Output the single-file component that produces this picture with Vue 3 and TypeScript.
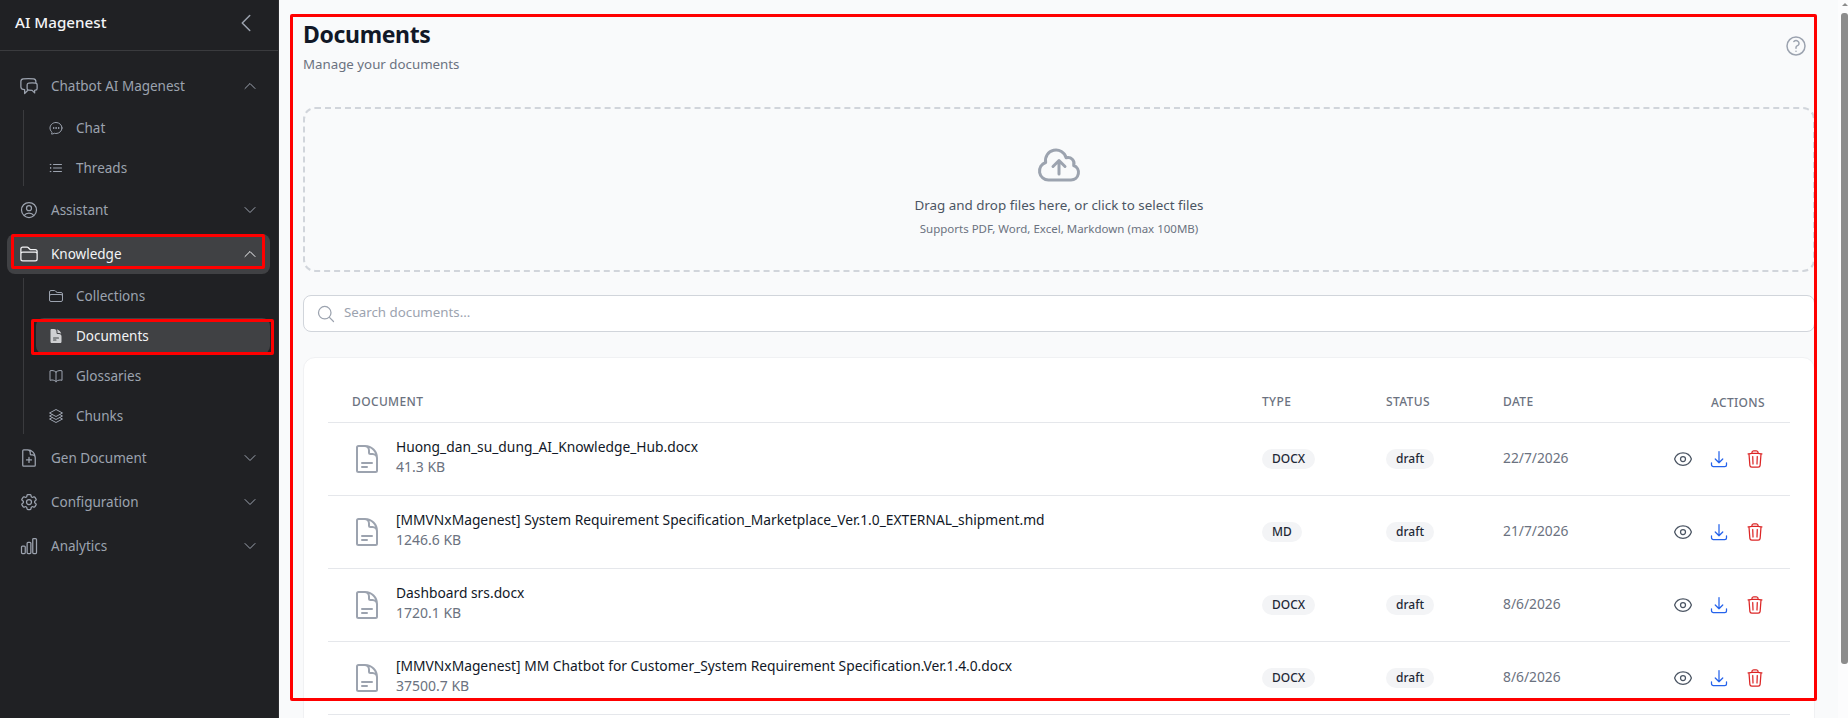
<template>
  <div class="app">
    <aside class="sidebar">
      <div class="brand">
        <span class="brand__name">AI Magenest</span>
        <svg class="icon brand__toggle" viewBox="0 0 24 24"><path :d="icons.chevronLeft" /></svg>
      </div>
      <nav class="nav">
        <template v-for="group in nav" :key="group.label">
          <div class="nav-item" :class="{ 'nav-item--active': group.active }">
            <svg class="icon nav-item__icon" viewBox="0 0 24 24"><path :d="icons[group.icon]" /></svg>
            <span class="nav-item__label">{{ group.label }}</span>
            <svg class="icon nav-item__chevron" viewBox="0 0 24 24">
              <path :d="group.children ? icons.chevronUp : icons.chevronDown" />
            </svg>
          </div>
          <div v-if="group.children" class="subnav">
            <div
              v-for="child in group.children"
              :key="child.label"
              class="subnav-item"
              :class="{ 'subnav-item--active': child.active }"
            >
              <svg class="icon subnav-item__icon" viewBox="0 0 24 24"><path :d="icons[child.icon]" /></svg>
              <span class="subnav-item__label">{{ child.label }}</span>
            </div>
          </div>
        </template>
      </nav>
    </aside>

    <main class="main">
      <header class="page-head">
        <div>
          <h1 class="page-head__title">Documents</h1>
          <p class="page-head__sub">Manage your documents</p>
        </div>
        <svg class="icon page-head__help" viewBox="0 0 24 24"><path :d="icons.help" /></svg>
      </header>

      <section class="dropzone">
        <svg class="icon dropzone__icon" viewBox="0 0 24 24"><path :d="icons.cloud" /></svg>
        <p class="dropzone__text">Drag and drop files here, or click to select files</p>
        <p class="dropzone__hint">Supports PDF, Word, Excel, Markdown (max 100MB)</p>
      </section>

      <div class="search">
        <svg class="icon search__icon" viewBox="0 0 24 24"><path :d="icons.search" /></svg>
        <span class="search__text">Search documents...</span>
      </div>

      <section class="card">
        <div class="row row--head">
          <div class="cell cell--label">Document</div>
          <div class="cell cell--label">Type</div>
          <div class="cell cell--label">Status</div>
          <div class="cell cell--label">Date</div>
          <div class="cell cell--label cell--actions">Actions</div>
        </div>
        <div v-for="doc in docs" :key="doc.name" class="row">
          <div class="cell doc">
            <svg class="icon doc__icon" viewBox="0 0 24 24"><path :d="icons.document" /></svg>
            <div class="doc__text">
              <div class="doc__name">{{ doc.name }}</div>
              <div class="doc__size">{{ doc.size }}</div>
            </div>
          </div>
          <div class="cell"><span class="pill">{{ doc.type }}</span></div>
          <div class="cell"><span class="pill">draft</span></div>
          <div class="cell date">{{ doc.date }}</div>
          <div class="cell cell--actions actions">
            <svg class="icon action action--view" viewBox="0 0 24 24"><path :d="icons.eye" /></svg>
            <svg class="icon action action--download" viewBox="0 0 24 24"><path :d="icons.download" /></svg>
            <svg class="icon action action--delete" viewBox="0 0 24 24"><path :d="icons.trash" /></svg>
          </div>
        </div>
      </section>
    </main>

    <div class="scrollbar">
      <span class="scrollbar__arrow" />
      <span class="scrollbar__thumb" />
    </div>

    <!-- red annotation boxes drawn over the screenshot -->
    <div class="mark mark--knowledge" />
    <div class="mark mark--documents" />
    <div class="mark mark--main" />
  </div>
</template>

<script setup lang="ts">
const icons: Record<string, string> = {
  chevronLeft: 'M15.75 19.5L8.25 12l7.5-7.5',
  chevronUp: 'M4.5 15.75l7.5-7.5 7.5 7.5',
  chevronDown: 'M19.5 8.25l-7.5 7.5-7.5-7.5',
  chats: 'M20.25 8.511c.884.284 1.5 1.128 1.5 2.097v4.286c0 1.136-.847 2.1-1.98 2.193-.34.027-.68.052-1.02.072v3.091l-3-3c-1.354 0-2.694-.055-4.02-.163a2.115 2.115 0 01-.825-.242m9.345-8.334a2.126 2.126 0 00-.476-.095 48.64 48.64 0 00-8.048 0c-1.131.094-1.976 1.057-1.976 2.192v4.286c0 .837.46 1.58 1.155 1.951m9.345-8.334V6.637c0-1.621-1.152-3.026-2.76-3.235A48.455 48.455 0 0011.25 3c-2.115 0-4.198.137-6.24.402-1.608.209-2.76 1.614-2.76 3.235v6.226c0 1.621 1.152 3.026 2.76 3.235.577.075 1.157.14 1.74.194V21l4.155-4.155',
  chat: 'M8.625 12a.375.375 0 11-.75 0 .375.375 0 01.75 0zm0 0H8.25m4.125 0a.375.375 0 11-.75 0 .375.375 0 01.75 0zm0 0H12m4.125 0a.375.375 0 11-.75 0 .375.375 0 01.75 0zm0 0h-.375M21 12c0 4.556-4.03 8.25-9 8.25a9.764 9.764 0 01-2.555-.337A5.972 5.972 0 015.41 20.97a5.969 5.969 0 01-.474-.065 4.48 4.48 0 00.978-2.025c.09-.457-.133-.901-.467-1.226C3.93 16.178 3 14.189 3 12c0-4.556 4.03-8.25 9-8.25s9 3.694 9 8.25z',
  list: 'M8.25 6.75h12M8.25 12h12m-12 5.25h12M3.75 6.75h.007v.008H3.75V6.75zm.375 0a.375.375 0 11-.75 0 .375.375 0 01.75 0zM3.75 12h.007v.008H3.75V12zm.375 0a.375.375 0 11-.75 0 .375.375 0 01.75 0zm-.375 5.25h.007v.008H3.75v-.008zm.375 0a.375.375 0 11-.75 0 .375.375 0 01.75 0z',
  user: 'M17.982 18.725A7.488 7.488 0 0012 15.75a7.488 7.488 0 00-5.982 2.975m11.963 0a9 9 0 10-11.963 0m11.963 0A8.966 8.966 0 0112 21a8.966 8.966 0 01-5.982-2.275M15 9.75a3 3 0 11-6 0 3 3 0 016 0z',
  folder: 'M2.25 12.75V12A2.25 2.25 0 014.5 9.75h15A2.25 2.25 0 0121.75 12v.75m-8.69-6.44l-2.12-2.12a1.5 1.5 0 00-1.061-.44H4.5A2.25 2.25 0 002.25 6v12a2.25 2.25 0 002.25 2.25h15A2.25 2.25 0 0021.75 18V9a2.25 2.25 0 00-2.25-2.25h-5.379a1.5 1.5 0 01-1.06-.44z',
  document: 'M19.5 14.25v-2.625a3.375 3.375 0 00-3.375-3.375h-1.5A1.125 1.125 0 0113.5 7.125v-1.5a3.375 3.375 0 00-3.375-3.375H8.25m0 12.75h7.5m-7.5 3H12M10.5 2.25H5.625c-.621 0-1.125.504-1.125 1.125v17.25c0 .621.504 1.125 1.125 1.125h12.75c.621 0 1.125-.504 1.125-1.125V11.25a9 9 0 00-9-9z',
  documentSolid: 'M5.625 1.5c-1.036 0-1.875.84-1.875 1.875v17.25c0 1.035.84 1.875 1.875 1.875h12.75c1.035 0 1.875-.84 1.875-1.875V12.75A3.75 3.75 0 0016.5 9h-1.875a1.875 1.875 0 01-1.875-1.875V5.25A3.75 3.75 0 009 1.5H5.625zM7.5 15a.75.75 0 01.75-.75h7.5a.75.75 0 010 1.5h-7.5A.75.75 0 017.5 15zm.75 2.25a.75.75 0 000 1.5H12a.75.75 0 000-1.5H8.25zM12.971 1.816A5.23 5.23 0 0114.25 5.25v1.875c0 .207.168.375.375.375H16.5a5.23 5.23 0 013.434 1.279 9.768 9.768 0 00-6.963-6.963z',
  book: 'M12 6.042A8.967 8.967 0 006 3.75c-1.052 0-2.062.18-3 .512v14.25A8.987 8.987 0 016 18c2.305 0 4.408.867 6 2.292m0-14.25a8.966 8.966 0 016-2.292c1.052 0 2.062.18 3 .512v14.25A8.987 8.987 0 0018 18a8.967 8.967 0 00-6 2.292m0-14.25v14.25',
  stack: 'M6.429 9.75L2.25 12l4.179 2.25m0-4.5l5.571 3 5.571-3m-11.142 0L2.25 7.5 12 2.25l9.75 5.25-4.179 2.25m0 0L21.75 12l-4.179 2.25m0 0l4.179 2.25L12 21.75 2.25 16.5l4.179-2.25m11.142 0l-5.571 3-5.571-3',
  docPlus: 'M19.5 14.25v-2.625a3.375 3.375 0 00-3.375-3.375h-1.5A1.125 1.125 0 0113.5 7.125v-1.5a3.375 3.375 0 00-3.375-3.375H8.25m3.75 9v6m3-3H9m1.5-12H5.625c-.621 0-1.125.504-1.125 1.125v17.25c0 .621.504 1.125 1.125 1.125h12.75c.621 0 1.125-.504 1.125-1.125V11.25a9 9 0 00-9-9z',
  cog: 'M9.594 3.94c.09-.542.56-.94 1.11-.94h2.593c.55 0 1.02.398 1.11.94l.213 1.281c.063.374.313.686.645.87.074.04.147.083.22.127.324.196.72.257 1.075.124l1.217-.456a1.125 1.125 0 011.37.49l1.296 2.247a1.125 1.125 0 01-.26 1.431l-1.003.827c-.293.24-.438.613-.431.992a6.759 6.759 0 010 .255c-.007.378.138.75.43.99l1.005.828c.424.35.534.954.26 1.43l-1.298 2.247a1.125 1.125 0 01-1.369.491l-1.217-.456c-.355-.133-.75-.072-1.076.124a6.57 6.57 0 01-.22.128c-.331.183-.581.495-.644.869l-.213 1.28c-.09.543-.56.941-1.11.941h-2.594c-.55 0-1.02-.398-1.11-.94l-.213-1.281c-.062-.374-.312-.686-.644-.87a6.52 6.52 0 01-.22-.127c-.325-.196-.72-.257-1.076-.124l-1.217.456a1.125 1.125 0 01-1.369-.49l-1.297-2.247a1.125 1.125 0 01.26-1.431l1.004-.827c.292-.24.437-.613.43-.992a6.932 6.932 0 010-.255c.007-.378-.138-.75-.43-.99l-1.004-.828a1.125 1.125 0 01-.26-1.43l1.297-2.247a1.125 1.125 0 011.37-.491l1.216.456c.356.133.751.072 1.076-.124.072-.044.146-.087.22-.128.332-.183.582-.495.644-.869l.214-1.281zM15 12a3 3 0 11-6 0 3 3 0 016 0z',
  chart: 'M3 13.125C3 12.504 3.504 12 4.125 12h2.25c.621 0 1.125.504 1.125 1.125v6.75C7.5 20.496 6.996 21 6.375 21h-2.25A1.125 1.125 0 013 19.875v-6.75zM9.75 8.625c0-.621.504-1.125 1.125-1.125h2.25c.621 0 1.125.504 1.125 1.125v11.25c0 .621-.504 1.125-1.125 1.125h-2.25a1.125 1.125 0 01-1.125-1.125V8.625zM16.5 4.125c0-.621.504-1.125 1.125-1.125h2.25C20.496 3 21 3.504 21 4.125v15.75c0 .621-.504 1.125-1.125 1.125h-2.25a1.125 1.125 0 01-1.125-1.125V4.125z',
  help: 'M9.879 7.519c1.171-1.025 3.071-1.025 4.242 0 1.172 1.025 1.172 2.687 0 3.712-.203.179-.43.326-.67.442-.745.361-1.45.999-1.45 1.827v.75M21 12a9 9 0 11-18 0 9 9 0 0118 0zm-9 5.25h.008v.008H12v-.008z',
  cloud: 'M12 16.5V9.75m0 0l3 3m-3-3l-3 3M6.75 19.5a4.5 4.5 0 01-1.41-8.775 5.25 5.25 0 0110.233-2.33 3 3 0 013.758 3.848A3.752 3.752 0 0118 19.5H6.75z',
  search: 'M21 21l-5.197-5.197m0 0A7.5 7.5 0 105.196 5.196a7.5 7.5 0 0010.607 10.607z',
  eye: 'M2.036 12.322a1.012 1.012 0 010-.639C3.423 7.51 7.36 4.5 12 4.5c4.638 0 8.573 3.007 9.963 7.178.07.207.07.431 0 .639C20.577 16.49 16.64 19.5 12 19.5c-4.638 0-8.573-3.007-9.963-7.178zM15 12a3 3 0 11-6 0 3 3 0 016 0z',
  download: 'M3 16.5v2.25A2.25 2.25 0 005.25 21h13.5A2.25 2.25 0 0021 18.75V16.5M16.5 12L12 16.5m0 0L7.5 12m4.5 4.5V3',
  trash: 'M14.74 9l-.346 9m-4.788 0L9.26 9m9.968-3.21c.342.052.682.107 1.022.166m-1.022-.165L18.16 19.673a2.25 2.25 0 01-2.244 2.077H8.084a2.25 2.25 0 01-2.244-2.077L4.772 5.79m14.456 0a48.108 48.108 0 00-3.478-.397m-12 .562c.34-.059.68-.114 1.022-.165m0 0a48.11 48.11 0 013.478-.397m7.5 0v-.916c0-1.18-.91-2.164-2.09-2.201a51.964 51.964 0 00-3.32 0c-1.18.037-2.09 1.022-2.09 2.201v.916m7.5 0a48.667 48.667 0 00-7.5 0',
}

interface NavChild { label: string; icon: string; active?: boolean }
interface NavGroup { label: string; icon: string; active?: boolean; children?: NavChild[] }

const nav: NavGroup[] = [
  {
    label: 'Chatbot AI Magenest',
    icon: 'chats',
    children: [
      { label: 'Chat', icon: 'chat' },
      { label: 'Threads', icon: 'list' },
    ],
  },
  { label: 'Assistant', icon: 'user' },
  {
    label: 'Knowledge',
    icon: 'folder',
    active: true,
    children: [
      { label: 'Collections', icon: 'folder' },
      { label: 'Documents', icon: 'documentSolid', active: true },
      { label: 'Glossaries', icon: 'book' },
      { label: 'Chunks', icon: 'stack' },
    ],
  },
  { label: 'Gen Document', icon: 'docPlus' },
  { label: 'Configuration', icon: 'cog' },
  { label: 'Analytics', icon: 'chart' },
]

const docs = [
  { name: 'Huong_dan_su_dung_AI_Knowledge_Hub.docx', size: '41.3 KB', type: 'DOCX', date: '22/7/2026' },
  { name: '[MMVNxMagenest] System Requirement Specification_Marketplace_Ver.1.0_EXTERNAL_shipment.md', size: '1246.6 KB', type: 'MD', date: '21/7/2026' },
  { name: 'Dashboard srs.docx', size: '1720.1 KB', type: 'DOCX', date: '8/6/2026' },
  { name: '[MMVNxMagenest] MM Chatbot for Customer_System Requirement Specification.Ver.1.4.0.docx', size: '37500.7 KB', type: 'DOCX', date: '8/6/2026' },
]
</script>

<style>
html, body { margin: 0; overflow: hidden; }
</style>

<style scoped>
.app {
  position: relative;
  display: flex;
  height: 718px;
  overflow: hidden;
  background: #f9fafb;
  font-family: "Noto Sans", "Open Sans", sans-serif;
  font-size: 13.5px;
  color: #111827;
}

.icon {
  display: block;
  flex-shrink: 0;
  fill: none;
  stroke: currentColor;
  stroke-width: 1.5;
  stroke-linecap: round;
  stroke-linejoin: round;
}

/* sidebar */
.sidebar {
  width: 279px;
  flex-shrink: 0;
  box-sizing: border-box;
  background: #202124;
  border-right: 1px solid #2c2d30;
  color: #9ca3af;
}
.brand {
  height: 51px;
  box-sizing: border-box;
  display: flex;
  align-items: center;
  justify-content: space-between;
  padding: 0 20px 5px 15px;
  border-bottom: 1px solid #3a3b3e;
}
.brand__name {
  padding-bottom: 2px;
  color: #f3f4f6;
  font-size: 15.2px;
  font-weight: 500;
}
.brand__toggle {
  width: 24px;
  height: 24px;
  color: #9ca3af;
}

.nav {
  display: flex;
  flex-direction: column;
  gap: 4px;
  padding: 15px 8px 0 7px;
}
.nav-item {
  height: 40px;
  display: flex;
  align-items: center;
  padding: 0 12px;
  border-radius: 8px;
}
.nav-item__icon {
  width: 20px;
  height: 20px;
}
.nav-item__label {
  flex: 1;
  margin-left: 12px;
  padding-bottom: 1px;
}
.nav-item__chevron {
  width: 16px;
  height: 16px;
}
.nav-item--active {
  background: #404144;
  color: #f3f4f6;
}

.subnav {
  display: flex;
  flex-direction: column;
  gap: 4px;
  margin-left: 16px;
  padding-left: 12px;
  border-left: 1px solid #3a3b3e;
}
.subnav-item {
  height: 36px;
  display: flex;
  align-items: center;
  gap: 12px;
  padding-left: 12px;
  border-radius: 8px;
}
.subnav-item__icon {
  width: 16px;
  height: 16px;
}
.subnav-item__label {
  padding-bottom: 1px;
}
.subnav-item--active {
  background: #404144;
  color: #f3f4f6;
}
.subnav-item--active .subnav-item__icon {
  fill: currentColor;
  fill-opacity: 0.8;
  stroke: none;
  fill-rule: evenodd;
}

/* main */
.main {
  flex: 1;
  min-width: 0;
  padding: 19px 23px 0 24px;
}
.page-head {
  display: flex;
  justify-content: space-between;
  height: 88px;
}
.page-head__title {
  margin: 0;
  font-size: 23px;
  line-height: 30px;
  font-weight: 700;
  letter-spacing: -0.35px;
}
.page-head__sub {
  margin: 5px 0 0;
  font-size: 13.3px;
  line-height: 20px;
  color: #6b7280;
}
.page-head__help {
  width: 24px;
  height: 24px;
  margin: 15px 7px 0 0;
  color: #9ca3af;
}

.dropzone {
  height: 165px;
  box-sizing: border-box;
  border: 2px dashed #d1d5db;
  border-radius: 12px;
  display: flex;
  flex-direction: column;
  align-items: center;
  padding-top: 32px;
}
.dropzone__icon {
  width: 48px;
  height: 48px;
  color: #9ca3af;
}
.dropzone__text {
  margin: 6px 0 0;
  font-size: 13.4px;
  line-height: 20px;
  color: #4b5563;
}
.dropzone__hint {
  margin: 6px 0 0;
  font-size: 11.5px;
  line-height: 16px;
  color: #6b7280;
}

.search {
  height: 37px;
  box-sizing: border-box;
  margin-top: 23px;
  display: flex;
  align-items: center;
  gap: 8px;
  padding-left: 12px;
  background: #fff;
  border: 1px solid #d1d5db;
  border-radius: 8px;
  color: #9ca3af;
}
.search__icon {
  width: 20px;
  height: 20px;
}
.search__text {
  padding-bottom: 3px;
  font-size: 13.3px;
}

.card {
  margin-top: 25px;
  padding: 24px;
  background: #fff;
  border: 1px solid #f0f1f3;
  border-radius: 12px;
}
.row {
  display: grid;
  grid-template-columns: 1fr 124px 117px 140px 171px;
  align-items: center;
  height: 73px;
  box-sizing: border-box;
  border-bottom: 1px solid #e5e7eb;
}
.row--head {
  height: 41px;
}
.cell {
  padding-left: 24px;
}
.cell--label {
  padding-bottom: 2px;
  font-size: 12px;
  font-weight: 500;
  letter-spacing: 0.03em;
  text-transform: uppercase;
  color: #6b7280;
}
.cell--actions {
  padding: 0 25px 0 0;
  text-align: right;
}
.doc {
  display: flex;
  align-items: center;
  gap: 13px;
}
.doc__icon {
  width: 32px;
  height: 32px;
  margin-left: -1px;
  color: #9ca3af;
}
.doc__text {
  padding-bottom: 4px;
}
.doc__name {
  font-size: 13.8px;
  line-height: 20px;
  color: #111827;
}
.doc__size {
  font-size: 14px;
  line-height: 20px;
  color: #6b7280;
}
.pill {
  display: inline-block;
  padding: 0 10px;
  line-height: 20px;
  font-size: 12px;
  font-weight: 500;
  color: #1f2937;
  background: #f3f4f6;
  border-radius: 9999px;
}
.date {
  padding-bottom: 3px;
  font-size: 13.8px;
  color: #6b7280;
}
.actions {
  display: flex;
  justify-content: flex-end;
  gap: 16px;
}
.action {
  width: 20px;
  height: 20px;
}
.action--view { color: #4b5563; }
.action--download { color: #2563eb; }
.action--delete { color: #dc2626; }

/* browser scrollbar, not a real scroller here */
.scrollbar {
  width: 10px;
  flex-shrink: 0;
  display: flex;
  flex-direction: column;
  align-items: flex-end;
  background: #fcfcfd;
}
.scrollbar__arrow {
  margin-top: 3px;
  border-left: 3px solid transparent;
  border-right: 3px solid transparent;
  border-bottom: 3px solid #8c8c8c;
}
.scrollbar__thumb {
  margin-top: 7px;
  width: 7px;
  height: 651px;
  background: #8c8c8c;
  border-radius: 3px;
}

/* annotations */
.mark {
  position: absolute;
  box-sizing: border-box;
  border: 3px solid #f00;
  border-radius: 2px;
  pointer-events: none;
}
.mark--knowledge {
  left: 11px;
  top: 234px;
  width: 254px;
  height: 35px;
}
.mark--documents {
  left: 31px;
  top: 319px;
  width: 243px;
  height: 36px;
}
.mark--main {
  left: 290px;
  top: 14px;
  width: 1527px;
  height: 687px;
}
</style>
